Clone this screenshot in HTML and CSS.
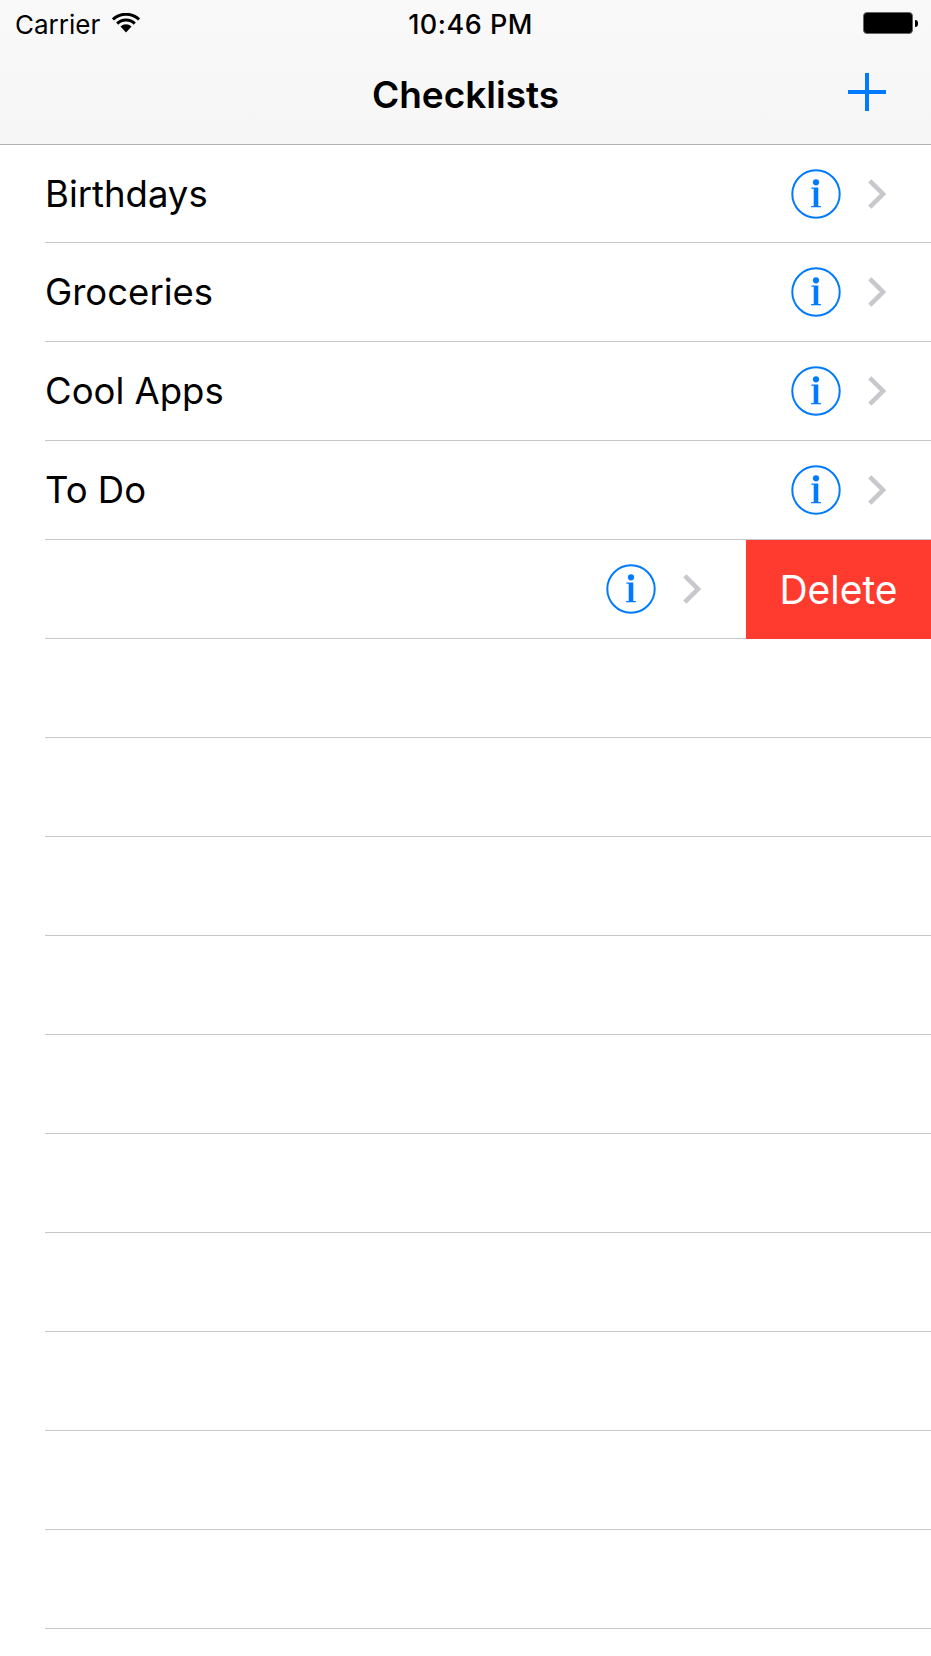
FILE: index.html
```html
<!DOCTYPE html>
<html lang="en">
  <head>
    <meta charset="UTF-8" />
    <meta name="viewport" content="width=device-width, initial-scale=1.0" />
    <title>Checklists</title>
    <link rel="stylesheet" href="styles.css">
  </head>
  <body>
    <svg class="defs" width="0" height="0">
      <symbol id="info" viewBox="0 0 50 50">
        <circle cx="25" cy="25" r="23.7" fill="none" stroke="#007aff" stroke-width="2" />
        <circle cx="25" cy="13.3" r="3.1" fill="#007aff" />
        <path d="M20.4 18.4h6.9V36.9h2.6v1.4H20.1v-1.4h2.6V19.8h-2.3z" fill="#007aff" />
      </symbol>
      <symbol id="chevron" viewBox="0 0 18 30">
        <path d="M1.8 1.8l13.2 13.2L1.8 28.2" fill="none" stroke="#c7c7cc" stroke-width="4.5" />
      </symbol>
    </svg>
    <header>
      <div class="status">
        <div class="carrier">
          <span>Carrier</span>
          <svg class="wifi" width="28" height="20" viewBox="0 0 28 20">
            <path d="M14 19.5L8.5 13.5A8 8 0 0 1 19.5 13.5z" fill="#000" />
            <path d="M5.2 10.6A12.5 12.5 0 0 1 22.8 10.6" fill="none" stroke="#000" stroke-width="3" />
            <path d="M0.9 6.5A19 19 0 0 1 27.1 6.5" fill="none" stroke="#000" stroke-width="3" />
          </svg>
        </div>
        <div class="time">10:46 PM</div>
        <div class="battery"><div class="cell"></div><div class="nub"></div></div>
      </div>
      <nav>
        <h1>Checklists</h1>
        <svg class="add" width="38" height="38" viewBox="0 0 38 38">
          <path d="M17 0h4v17H38v4H21V38h-4V21H0v-4h17z" fill="#007aff" />
        </svg>
      </nav>
    </header>
    <main>
      <ul class="list">
        <li class="row">
          <span class="name">Birthdays</span>
          <svg class="info"><use href="#info" /></svg>
          <svg class="chev"><use href="#chevron" /></svg>
        </li>
        <li class="row">
          <span class="name">Groceries</span>
          <svg class="info"><use href="#info" /></svg>
          <svg class="chev"><use href="#chevron" /></svg>
        </li>
        <li class="row">
          <span class="name">Cool Apps</span>
          <svg class="info"><use href="#info" /></svg>
          <svg class="chev"><use href="#chevron" /></svg>
        </li>
        <li class="row">
          <span class="name">To Do</span>
          <svg class="info"><use href="#info" /></svg>
          <svg class="chev"><use href="#chevron" /></svg>
        </li>
        <li class="row swiped">
          <span class="name"></span>
          <svg class="info"><use href="#info" /></svg>
          <svg class="chev"><use href="#chevron" /></svg>
          <button class="delete">Delete</button>
        </li>
        <li class="row"></li>
        <li class="row"></li>
        <li class="row"></li>
        <li class="row"></li>
        <li class="row"></li>
        <li class="row"></li>
        <li class="row"></li>
        <li class="row"></li>
        <li class="row"></li>
        <li class="row"></li>
      </ul>
    </main>
  </body>
</html>
```

FILE: styles.css
```css
* {
  box-sizing: border-box;
}

html,
body {
  margin: 0;
  padding: 0;
  height: 100%;
  overflow: hidden;
  background-color: #fff;
}

body {
  font-family: Inter, "Liberation Sans", sans-serif;
  color: #000;
}

.defs {
  position: absolute;
}

/* top bar */
header {
  height: 145px;
  background: linear-gradient(#f9f9f9, #f6f6f6);
  border-bottom: 1px solid #b2b2b2;
}

.status {
  height: 46px;
  padding: 2px 13px 0 15px;
  display: grid;
  grid-template-columns: 1fr auto 1fr;
  align-items: center;
}

.carrier {
  display: flex;
  align-items: center;
  gap: 12px;
  font-size: 26px;
}

.wifi {
  margin-top: -2px;
}

.time {
  margin-left: 8px;
  font-size: 27px;
  font-weight: 500;
  letter-spacing: 0.5px;
}

.battery {
  display: flex;
  align-items: center;
  justify-content: flex-end;
  margin-top: -2px;
}

.cell {
  width: 50px;
  height: 22px;
  background-color: #000;
  border: 1px solid #666;
  border-radius: 4px;
}

.nub {
  width: 3px;
  height: 7px;
  margin-left: 2px;
  background-color: #000;
  border-radius: 0 3px 3px 0;
}

nav {
  height: 98px;
  padding-right: 45px;
  display: flex;
  align-items: center;
  justify-content: flex-end;
  position: relative;
}

h1 {
  margin: 0;
  font-size: 37px;
  font-weight: 600;
  position: absolute;
  left: 0;
  right: 0;
  top: 26px;
  text-align: center;
}

.add {
  margin-bottom: 6px;
}

/* list */
.list {
  list-style: none;
  margin: 0;
  padding: 0 0 0 45px;
}

.row {
  height: 99px;
  padding-right: 45px;
  display: flex;
  align-items: center;
  border-bottom: 1px solid #c8c7cc;
}

.row:first-child {
  height: 98px;
}

.name {
  flex: 1;
  font-size: 36.5px;
}

.info {
  width: 50px;
  height: 50px;
}

.chev {
  width: 18px;
  height: 30px;
  margin-left: 27px;
}

.swiped {
  padding-right: 0;
  position: relative;
}

.swiped .chev {
  margin-right: 45px;
}

.delete {
  width: 185px;
  height: 99px;
  border: none;
  padding: 0;
  margin-bottom: -1px;
  background-color: #ff3b30;
  color: #fff;
  font-family: inherit;
  font-size: 39px;
}
```
